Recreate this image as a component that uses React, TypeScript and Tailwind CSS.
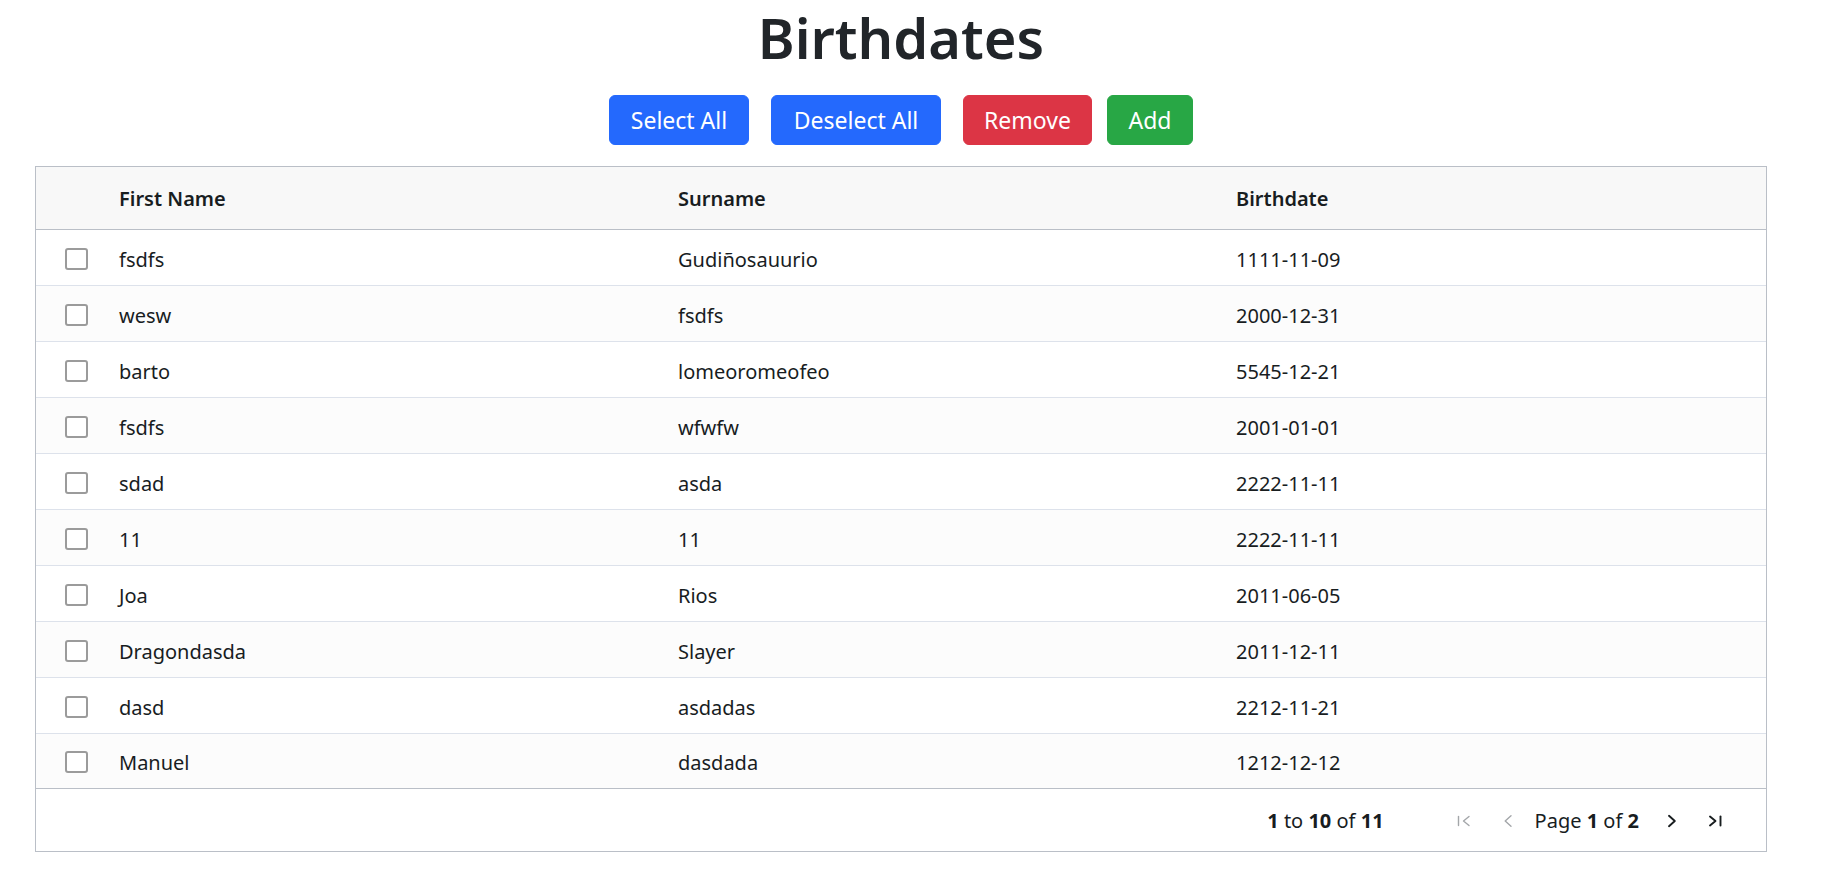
const rows = [
  { first: "fsdfs", last: "Gudiñosauurio", date: "1111-11-09" },
  { first: "wesw", last: "fsdfs", date: "2000-12-31" },
  { first: "barto", last: "lomeoromeofeo", date: "5545-12-21" },
  { first: "fsdfs", last: "wfwfw", date: "2001-01-01" },
  { first: "sdad", last: "asda", date: "2222-11-11" },
  { first: "11", last: "11", date: "2222-11-11" },
  { first: "Joa", last: "Rios", date: "2011-06-05" },
  { first: "Dragondasda", last: "Slayer", date: "2011-12-11" },
  { first: "dasd", last: "asdadas", date: "2212-11-21" },
  { first: "Manuel", last: "dasdada", date: "1212-12-12" },
];

function PageIcon({ kind, disabled }: { kind: "first" | "prev" | "next" | "last"; disabled?: boolean }) {
  const color = disabled ? "#a3a6a9" : "#181d1f";
  const sw = disabled ? 1.4 : 1.9;
  return (
    <svg width="16" height="16" viewBox="0 0 16 16" fill="none" stroke={color} strokeWidth={sw} strokeLinecap="round" strokeLinejoin="round">
      {kind === "first" && (
        <>
          <path d="M2.5 3.5v9" />
          <path d="M13 3.5L7.5 8l5.5 4.5" />
        </>
      )}
      {kind === "prev" && <path d="M11 2.8L5.2 8l5.8 5.2" />}
      {kind === "next" && <path d="M5 2.8L10.8 8 5 13.2" />}
      {kind === "last" && (
        <>
          <path d="M3 3.5L8.5 8 3 12.5" />
          <path d="M13.5 3.5v9" />
        </>
      )}
    </svg>
  );
}

export default function App() {
  return (
    <div className="w-[1802px] bg-white px-[35px] pt-[9px] pb-[36px] font-['Noto_Sans',sans-serif] text-[#181d1f]">
      <h1 className="text-center text-[56px] font-semibold leading-none text-[#212529]">Birthdates</h1>

      <div className="mt-[30px] flex justify-center text-[23px] text-white">
        <button className="flex h-[50px] w-[140px] items-center justify-center rounded-[6px] border border-[#2469fd] bg-[#2469fd]">
          Select All
        </button>
        <button className="ml-[22px] flex h-[50px] w-[170px] items-center justify-center rounded-[6px] border border-[#2469fd] bg-[#2469fd]">
          Deselect All
        </button>
        <button className="ml-[22px] flex h-[50px] w-[129px] items-center justify-center rounded-[6px] border border-[#dc3545] bg-[#dc3545]">
          Remove
        </button>
        <button className="ml-[15px] flex h-[50px] w-[86px] items-center justify-center rounded-[6px] border border-[#28a745] bg-[#28a745]">
          Add
        </button>
      </div>

      {/* grid */}
      <div className="mt-[21px] border border-[#babfc7] text-[20px]">
        <div className="grid h-[63px] grid-cols-[83px_559px_558px_1fr] items-center border-b border-[#babfc7] bg-[#f8f8f8] pt-[2px] font-semibold">
          <div />
          <div>First Name</div>
          <div>Surname</div>
          <div>Birthdate</div>
        </div>

        {rows.map((r, i) => (
          <div
            key={i}
            className={`grid grid-cols-[83px_559px_558px_1fr] items-center pt-[2px] ${
              i % 2 === 1 ? "bg-[#fcfcfc]" : "bg-white"
            } ${i < rows.length - 1 ? "h-[56px] border-b border-[#dde2eb]" : "h-[54px]"}`}
          >
            <div className="pl-[29px]">
              <div className="h-[22px] w-[23px] rounded-[3px] border-2 border-[#9b9b9b] bg-white" />
            </div>
            <div className="pt-[2px]">{r.first}</div>
            <div className="pt-[2px]">{r.last}</div>
            <div className="pt-[2px]">{r.date}</div>
          </div>
        ))}

        <div className="flex h-[63px] items-center justify-end border-t border-[#babfc7] pt-[2px] pr-[43px]">
          <span>
            <b>1</b> to <b>10</b> of <b>11</b>
          </span>
          <span className="ml-[72px]">
            <PageIcon kind="first" disabled />
          </span>
          <span className="ml-[28px]">
            <PageIcon kind="prev" disabled />
          </span>
          <span className="ml-[19px]">
            Page <b>1</b> of <b>2</b>
          </span>
          <span className="ml-[25px]">
            <PageIcon kind="next" />
          </span>
          <span className="ml-[27px]">
            <PageIcon kind="last" />
          </span>
        </div>
      </div>
    </div>
  );
}
